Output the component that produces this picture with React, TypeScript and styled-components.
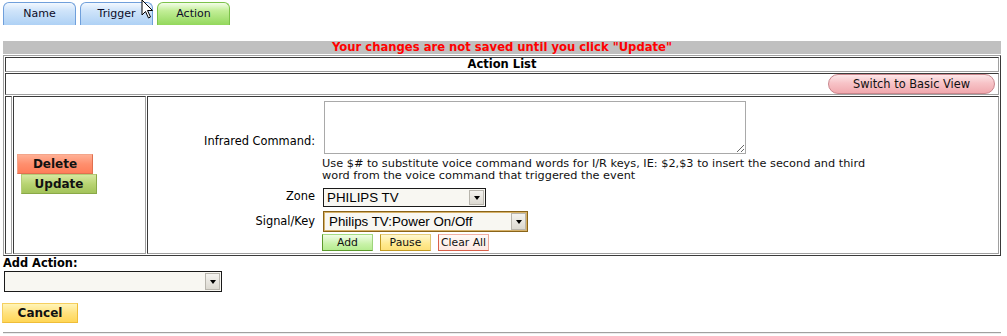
import React from "react";
import styled, { createGlobalStyle, css } from "styled-components";

const GlobalStyle = createGlobalStyle`
  html, body { margin: 0; padding: 0; background: #ffffff; }
  body {
    font-family: "DejaVu Sans", Verdana, sans-serif;
    color: #000;
    overflow: hidden;
  }
`;

const SANS = `"DejaVu Sans", Verdana, sans-serif`;
const ARIAL = `"Liberation Sans", Arial, sans-serif`;

const Page = styled.div`
  position: relative;
  width: 1007px;
  height: 336px;
  padding-top: 2px;
  box-sizing: border-box;
`;

const Cursor = styled.svg`
  position: absolute;
  left: 141px;
  top: -1px;
  width: 14px;
  height: 20px;
`;

const TabBar = styled.div`
  display: flex;
  gap: 4px;
  padding-left: 3px;
  height: 23px;
`;

const Tab = styled.div<{ $active?: boolean }>`
  width: 73px;
  height: 23px;
  box-sizing: border-box;
  border: 1px solid #6f9fdb;
  border-bottom: none;
  border-radius: 6px 6px 0 0;
  background: linear-gradient(#f2f8ff 0%, #cfe4fa 35%, #aed1f5 100%);
  font-family: ${SANS};
  font-size: 11px;
  line-height: 22px;
  text-align: center;
  color: #0c0c28;
  ${(p) =>
    p.$active &&
    css`
      border-color: #7cc24a;
      background: linear-gradient(#f4fde9 0%, #c2ee97 35%, #93d85c 100%);
    `}
`;

const Notice = styled.div`
  margin: 16px 6px 0 3px;
  height: 13px;
  background: #c0c0c0;
  color: #ff0000;
  font-family: ${SANS};
  font-weight: bold;
  font-size: 11.6px;
  line-height: 13px;
  text-align: center;
  white-space: nowrap;
`;

const Frame = styled.div`
  margin: 1px 6px 0 3px;
  border: 1px solid;
  border-color: #a0a0a0 #3a3a3a #3a3a3a #a0a0a0;
  padding: 1px;
  display: grid;
  row-gap: 1px;
`;

const cellBorder = css`
  border: 1px solid;
  border-color: #3a3a3a #a0a0a0 #a0a0a0 #3a3a3a;
  box-sizing: border-box;
`;

const HeaderCell = styled.div`
  ${cellBorder};
  height: 15px;
  font-family: ${SANS};
  font-weight: bold;
  font-size: 11.5px;
  line-height: 13px;
  text-align: center;
`;

const ToolCell = styled.div`
  ${cellBorder};
  height: 22px;
  display: flex;
  justify-content: flex-end;
  align-items: flex-start;
  padding-right: 3px;
`;

const PillButton = styled.div`
  width: 167px;
  height: 20px;
  box-sizing: border-box;
  border: 1px solid #c9858c;
  border-radius: 10px;
  background: linear-gradient(#fde6e8 0%, #f7c3c7 45%, #f1a9ae 100%);
  font-family: ${SANS};
  font-size: 11.4px;
  line-height: 18px;
  text-align: center;
  color: #111;
`;

const ActionRow = styled.div`
  display: grid;
  grid-template-columns: 7px 133px 1fr;
  column-gap: 1px;
  height: 158px;
`;

const Cell = styled.div`
  ${cellBorder};
`;

const ButtonCell = styled(Cell)`
  display: flex;
  flex-direction: column;
  justify-content: center;
  align-items: flex-start;
  padding-left: 3px;
  padding-bottom: 2px;
`;

const BoldButton = styled.div<{ $tone: "red" | "green" | "yellow"; $indent?: number }>`
  width: 76px;
  height: 20px;
  box-sizing: border-box;
  margin-left: ${(p) => p.$indent ?? 0}px;
  border: 1px solid;
  font-family: ${SANS};
  font-weight: bold;
  font-size: 12px;
  line-height: 18px;
  text-align: center;
  color: #111;
  ${(p) =>
    p.$tone === "red" &&
    css`
      border-color: #f3a58a #e0704f #e0704f #f3a58a;
      background: linear-gradient(#ffb095 0%, #ff8f6e 50%, #ff7e5a 100%);
    `}
  ${(p) =>
    p.$tone === "green" &&
    css`
      border-color: #b5cc78 #8aa948 #8aa948 #b5cc78;
      background: linear-gradient(#d6e8a0 0%, #b8d472 50%, #a3c35a 100%);
    `}
  ${(p) =>
    p.$tone === "yellow" &&
    css`
      border-color: #f5cf60 #efbd38 #efbd38 #f5cf60;
      background: linear-gradient(#fff4b8 0%, #ffe27e 50%, #ffd656 100%);
    `}
`;

const FormCell = styled(Cell)`
  display: grid;
  grid-template-columns: 168px 1fr;
  column-gap: 6px;
  align-content: start;
  font-family: ${SANS};
  font-size: 11.4px;
`;

const Label = styled.div<{ $bottom?: boolean }>`
  text-align: right;
  padding-right: 1px;
  align-self: ${(p) => (p.$bottom ? "end" : "center")};
  padding-bottom: ${(p) => (p.$bottom ? 6 : 0)}px;
  line-height: 14px;
  margin-top: ${(p) => (p.$bottom ? 0 : 2)}px;
`;

const CommandArea = styled.textarea`
  display: block;
  margin: 4px 0 0 2px;
  width: 422px;
  height: 53px;
  box-sizing: border-box;
  border: 1px solid #a9a9a9;
  padding: 2px;
  font-family: ${SANS};
  font-size: 11px;
  resize: both;
  outline: none;
`;

const HelpText = styled.div`
  margin-top: 4px;
  font-size: 11.3px;
  line-height: 12px;
  color: #111;
  white-space: nowrap;
`;

const FakeSelect = styled.div<{ $width: number; $height: number; $top: number; $focus?: boolean; $left?: number }>`
  position: relative;
  display: flex;
  align-items: center;
  width: ${(p) => p.$width}px;
  height: ${(p) => p.$height}px;
  margin-top: ${(p) => p.$top}px;
  margin-left: ${(p) => p.$left ?? 1}px;
  box-sizing: border-box;
  border: 1px solid #1a1a1a;
  background: #f8f7f2;
  font-family: ${ARIAL};
  font-size: 13.33px;
  padding-left: 3px;
  color: #000;
  ${(p) =>
    p.$focus &&
    css`
      border-color: #8a6418;
      box-shadow: inset 0 0 0 1px #d7b26a;
      padding-left: 5px;
    `}
`;

const SelectText = styled.span`
  flex: 1;
  white-space: nowrap;
  overflow: hidden;
`;

const ArrowBox = styled.span`
  width: 15px;
  align-self: stretch;
  margin: 1px;
  box-sizing: border-box;
  border: 1px solid #b8b5ad;
  background: linear-gradient(#f4f3ef, #dcd9d1);
  display: flex;
  align-items: center;
  justify-content: center;
  &::after {
    content: "";
    border-left: 3.5px solid transparent;
    border-right: 3.5px solid transparent;
    border-top: 4px solid #000;
  }
`;

const ButtonRow = styled.div`
  display: flex;
  gap: 7px;
  margin-top: 2px;
`;

const SmallButton = styled.div<{ $tone: "green" | "yellow" | "pink" }>`
  width: 51px;
  height: 17px;
  box-sizing: border-box;
  border: 1px solid;
  font-family: ${SANS};
  font-size: 10.8px;
  line-height: 15px;
  text-align: center;
  color: #111;
  ${(p) =>
    p.$tone === "green" &&
    css`
      border-color: #a4dc82 #9ed47c #5c9a2c #5c9a2c;
      background: linear-gradient(#f0fde6, #c8f2a8 60%, #b6ec90);
    `}
  ${(p) =>
    p.$tone === "yellow" &&
    css`
      border-color: #e6cd7a #e0c470 #c29a22 #c29a22;
      background: linear-gradient(#fff8d0, #ffe98e 60%, #fde07a);
    `}
  ${(p) =>
    p.$tone === "pink" &&
    css`
      border-color: #f2b0a4 #f0a898 #d8604a #d8604a;
      background: linear-gradient(#fffaf8, #fde8e2);
    `}
`;

const AddLabel = styled.div`
  padding-left: 3px;
  font-family: ${SANS};
  font-weight: bold;
  font-size: 11.4px;
  line-height: 14px;
`;

const CancelWrap = styled.div`
  margin: 11px 0 0 2px;
`;

const Rule = styled.div`
  margin: 9px 6px 0 3px;
  border-top: 1px solid #a0a0a0;
  border-bottom: 1px solid #ececec;
`;

export default function App() {
  return (
    <Page>
      <GlobalStyle />
      <TabBar>
        <Tab>Name</Tab>
        <Tab>Trigger</Tab>
        <Tab $active>Action</Tab>
      </TabBar>
      <Notice>Your changes are not saved until you click "Update"</Notice>
      <Frame>
        <HeaderCell>Action List</HeaderCell>
        <ToolCell>
          <PillButton>Switch to Basic View</PillButton>
        </ToolCell>
        <ActionRow>
          <Cell />
          <ButtonCell>
            <BoldButton $tone="red">Delete</BoldButton>
            <BoldButton $tone="green" $indent={4}>Update</BoldButton>
          </ButtonCell>
          <FormCell>
            <Label $bottom>Infrared Command:</Label>
            <div>
              <CommandArea />
            </div>
            <div />
            <HelpText>
              Use $# to substitute voice command words for I/R keys, IE: $2,$3 to insert the second and third
              <br />
              word from the voice command that triggered the event
            </HelpText>
            <Label>Zone</Label>
            <FakeSelect $width={163} $height={19} $top={6}>
              <SelectText>PHILIPS TV</SelectText>
              <ArrowBox />
            </FakeSelect>
            <Label>Signal/Key</Label>
            <FakeSelect $width={205} $height={21} $top={4} $focus>
              <SelectText>Philips TV:Power On/Off</SelectText>
              <ArrowBox />
            </FakeSelect>
            <div />
            <ButtonRow>
              <SmallButton $tone="green">Add</SmallButton>
              <SmallButton $tone="yellow">Pause</SmallButton>
              <SmallButton $tone="pink">Clear All</SmallButton>
            </ButtonRow>
          </FormCell>
        </ActionRow>
      </Frame>
      <AddLabel>Add Action:</AddLabel>
      <FakeSelect $width={218} $height={21} $top={1} $left={4}>
        <SelectText />
        <ArrowBox />
      </FakeSelect>
      <CancelWrap>
        <BoldButton $tone="yellow">Cancel</BoldButton>
      </CancelWrap>
      <Rule />
      <Cursor viewBox="0 0 14 20">
        <path d="M1 1 L1 16 L4.5 12.5 L7.5 19 L9.5 18 L6.5 11.5 L11.5 11.5 Z" fill="#fff" stroke="#000" strokeWidth="1" strokeLinejoin="miter" />
      </Cursor>
    </Page>
  );
}
